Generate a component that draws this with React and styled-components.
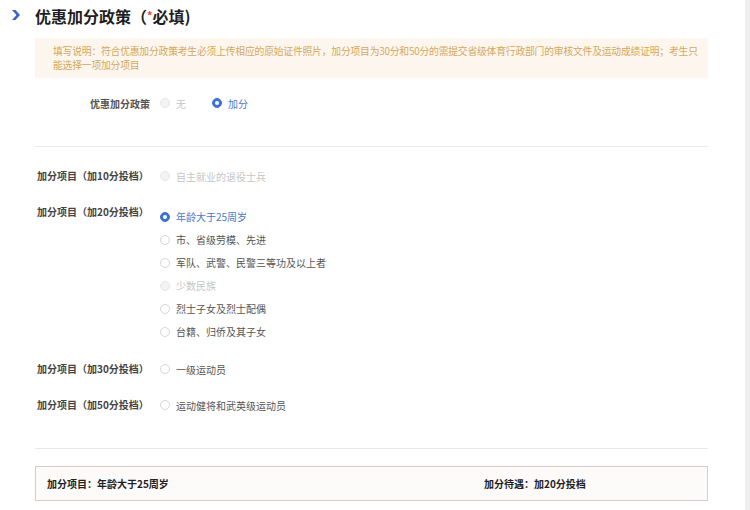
import React from "react";
import styled, { createGlobalStyle } from "styled-components";

const GlobalStyle = createGlobalStyle`
  body {
    margin: 0;
    background: #fff;
    font-family: "Noto Sans CJK SC", "Noto Sans", sans-serif;
  }
`

const Page = styled.div`
  display: flex;
  width: 750px;
  height: 510px;
  overflow: hidden;
`

const Main = styled.div`
  flex: 1;
  padding: 0 37px 0 12px;
`

const ScrollStrip = styled.div`
  width: 5px;
  background: #efefef;
`

const Header = styled.div`
  display: flex;
  align-items: center;
  gap: 15px;
  height: 30px;
`

const Title = styled.h2`
  margin: 0;
  font-size: 16px;
  font-weight: 700;
  color: #1f1f1f;
  line-height: 20px;
`

const Star = styled.span`
  color: #e0443e;
  font-size: 11px;
  vertical-align: 3px;
`

const Body = styled.div`
  margin-left: 23px;
`

const Notice = styled.div`
  margin-top: 8px;
  padding: 6px 8px 6px 18px;
  background: #fdf6ee;
  color: #d3a85c;
  font-size: 9.8px;
  letter-spacing: -0.2px;
  line-height: 14px;
`

const PolicyRow = styled.div`
  display: flex;
  align-items: center;
  height: 20px;
  margin-top: 15px;
`

const PolicyLabel = styled.span`
  width: 115px;
  padding-right: 10px;
  text-align: right;
  font-size: 10px;
  font-weight: 700;
  color: #555;
`

const Divider = styled.div`
  height: 1px;
  background: #e9e9e9;
  margin-top: ${(p) => p.top}px;
`

const ItemRow = styled.div`
  display: flex;
  align-items: flex-start;
  margin-top: ${(p) => p.top}px;
`

const ItemLabel = styled.span`
  width: 123px;
  padding-left: 2px;
  line-height: 20px;
  font-size: 10px;
  font-weight: 700;
  color: #444;
`

const Options = styled.div`
  display: flex;
  flex-direction: column;
  padding-top: ${(p) => (p.stack ? 3 : 0)}px;
`

const Option = styled.label`
  display: flex;
  align-items: center;
  gap: 6px;
  height: ${(p) => (p.stack ? 23 : 20)}px;
  margin-right: ${(p) => p.space || 0}px;
  font-size: 10px;
  color: ${(p) => (p.checked ? "#4a78c8" : p.disabled ? "#c6c6c6" : "#555")};
`

const Radio = styled.span`
  box-sizing: border-box;
  width: 10px;
  height: 10px;
  border-radius: 50%;
  border: 1px solid ${(p) => (p.checked ? "#3b74d9" : p.disabled ? "#e6e6e6" : "#d6d6d6")};
  background: ${(p) => (p.checked ? "#3b74d9" : p.disabled ? "#f3f3f3" : "#fff")};
  display: flex;
  align-items: center;
  justify-content: center;
  &::after {
    content: "";
    width: 4px;
    height: 4px;
    border-radius: 50%;
    background: #fff;
    display: ${(p) => (p.checked ? "block" : "none")};
  }
`

const Summary = styled.div`
  display: flex;
  align-items: center;
  height: 33px;
  margin-top: 17px;
  padding-left: 11px;
  border: 1px solid #d8ccc7;
  background: #fdfbfa;
  font-size: 10px;
  font-weight: 700;
  color: #222;
`

const SummaryItem = styled.span`
  width: ${(p) => p.w || "auto"};
`

const Chevron = () => (
  <svg width="8" height="10" viewBox="0 0 8 10">
    <polygon points="0,0 3.5,0 8,5 3.5,10 0,10 4.5,5" fill="#3a62c9" />
  </svg>
)

const Choice = ({ label, checked, disabled, stack, space }) => (
  <Option checked={checked} disabled={disabled} stack={stack} space={space}>
    <Radio checked={checked} disabled={disabled} />
    {label}
  </Option>
)

const items20 = [
  { label: "年龄大于25周岁", checked: true },
  { label: "市、省级劳模、先进" },
  { label: "军队、武警、民警三等功及以上者" },
  { label: "少数民族", disabled: true },
  { label: "烈士子女及烈士配偶" },
  { label: "台籍、归侨及其子女" },
]

export default function App() {
  return (
    <Page>
      <GlobalStyle />
      <Main>
        <Header>
          <Chevron />
          <Title>
            优惠加分政策（<Star>*</Star>必填)
          </Title>
        </Header>
        <Body>
          <Notice>
            填写说明：符合优惠加分政策考生必须上传相应的原始证件照片，加分项目为30分和50分的需提交省级体育行政部门的审核文件及运动成绩证明；考生只能选择一项加分项目
          </Notice>
          <PolicyRow>
            <PolicyLabel>优惠加分政策</PolicyLabel>
            <Choice label="无" disabled space={26} />
            <Choice label="加分" checked />
          </PolicyRow>
          <Divider top={33} />

          <ItemRow top={19}>
            <ItemLabel>加分项目（加10分投档）</ItemLabel>
            <Options>
              <Choice label="自主就业的退役士兵" disabled />
            </Options>
          </ItemRow>

          <ItemRow top={16}>
            <ItemLabel>加分项目（加20分投档）</ItemLabel>
            <Options stack>
              {items20.map((it) => (
                <Choice key={it.label} stack {...it} />
              ))}
            </Options>
          </ItemRow>

          <ItemRow top={16}>
            <ItemLabel>加分项目（加30分投档）</ItemLabel>
            <Options>
              <Choice label="一级运动员" />
            </Options>
          </ItemRow>

          <ItemRow top={16}>
            <ItemLabel>加分项目（加50分投档）</ItemLabel>
            <Options>
              <Choice label="运动健将和武英级运动员" />
            </Options>
          </ItemRow>

          <Divider top={33} />
          <Summary>
            <SummaryItem w="437px">加分项目：年龄大于25周岁</SummaryItem>
            <SummaryItem>加分待遇：加20分投档</SummaryItem>
          </Summary>
        </Body>
      </Main>
      <ScrollStrip />
    </Page>
  );
}
